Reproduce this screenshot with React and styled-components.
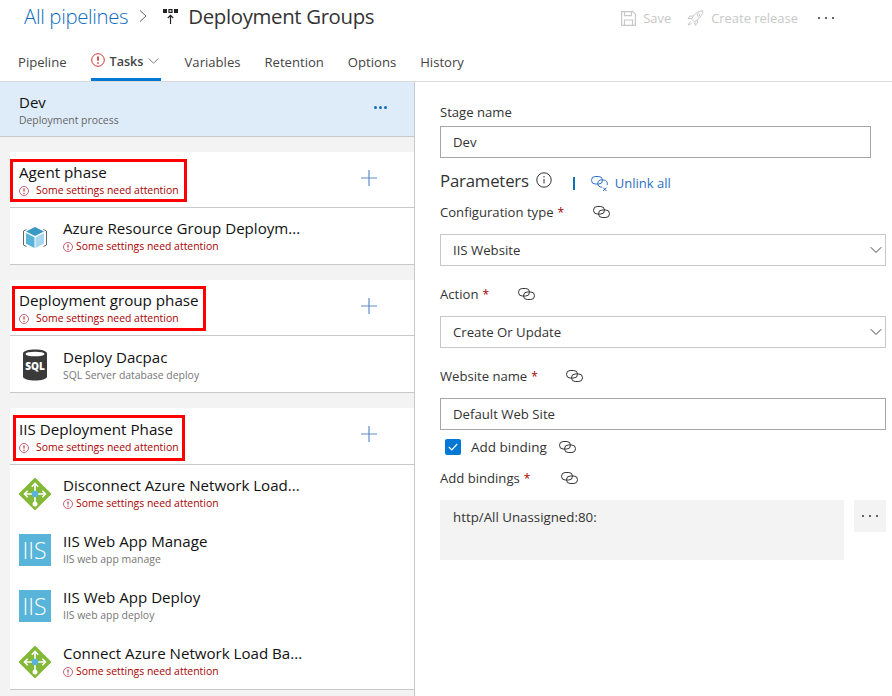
import React from "react";
import styled, { createGlobalStyle } from "styled-components";

const GlobalStyle = createGlobalStyle`
  html, body { margin: 0; padding: 0; background: #fff; }
  body { font-family: "Open Sans", "Noto Sans", "Liberation Sans", sans-serif; color: #333; }
  * { box-sizing: border-box; }
`;

const Page = styled.div`
  width: 892px;
  height: 696px;
  overflow: hidden;
  display: flex;
  flex-direction: column;
`;

const TopBar = styled.div`
  height: 36px;
  display: flex;
  align-items: center;
  justify-content: space-between;
  padding: 0 58px 4px 24px;
`;

const Crumbs = styled.div`
  display: flex;
  align-items: center;
  font-size: 20.4px;
  font-weight: 300;
  letter-spacing: -0.35px;
`;

const CrumbLink = styled.span`
  color: #106ebe;
`;

const CrumbArrow = styled.svg`
  width: 10px;
  height: 14px;
  margin: 0 15px 0 10px;
`;

const CrumbTitle = styled.span`
  color: #333;
  font-weight: 400;
  margin-left: 10px;
`;

const Actions = styled.div`
  display: flex;
  align-items: center;
  color: #c8c8c8;
  font-size: 12.95px;
  padding-top: 4px;
`;

const ActionItem = styled.div`
  display: flex;
  align-items: center;
  gap: 7px;
  margin-right: ${(p) => p.$gap}px;
`;

const MoreDots = styled.div`
  display: flex;
  gap: ${(p) => p.$gap || 5}px;
  & > i {
    width: ${(p) => p.$size || 2}px;
    height: ${(p) => p.$size || 2}px;
    border-radius: 50%;
    background: ${(p) => p.$color || "#333"};
    display: block;
  }
`;

const Tabs = styled.div`
  height: 46px;
  display: flex;
  padding: 0 0 0 18px;
  gap: 24px;
  border-bottom: 1px solid #dadada;
`;

const Tab = styled.div`
  height: 45px;
  padding-top: 16px;
  font-size: 13.1px;
  line-height: 20px;
  color: #444;
  display: flex;
  align-items: flex-start;
  gap: 5px;
  ${(p) =>
    p.$active &&
    `
    font-weight: 600;
    font-size: 12.6px;
    width: 70px;
    border-bottom: 3px solid #0078d4;
  `}
`;

const Body = styled.div`
  flex: 1;
  display: flex;
  min-height: 0;
`;

const LeftPanel = styled.div`
  width: 415px;
  flex: none;
  background: #f3f3f3;
  border-right: 1px solid #c8c8c8;
`;

const StageHeader = styled.div`
  height: 55px;
  background: #deecf9;
  border-bottom: 1px solid #c8c8c8;
  padding: 10px 27px 0 19px;
  display: flex;
  justify-content: space-between;
  align-items: flex-start;
  margin-bottom: 15px;
`;

const StageName = styled.div`
  font-size: 15px;
  line-height: 20px;
  color: #111;
`;

const StageSub = styled.div`
  font-size: 10.4px;
  line-height: 15px;
  color: #666;
  margin-top: 1px;
`;

const StageDots = styled.div`
  padding-top: 14px;
`;

const PhaseBlock = styled.div`
  margin: 0 0 15px 10px;
  background: #fff;
  border-bottom: 1px solid #c8c8c8;
`;

const PhaseHeader = styled.div`
  position: relative;
  height: ${(p) => (p.$tall ? 57 : 56)}px;
  padding: ${(p) => (p.$tall ? 11 : 10)}px 37px 0 9px;
  border-bottom: 1px solid #c8c8c8;
  display: flex;
  justify-content: space-between;
`;

const PhaseTitle = styled.div`
  font-size: 15.2px;
  line-height: 20px;
  color: #111;
`;

const RedFrame = styled.div`
  position: absolute;
  left: ${(p) => p.$left}px;
  top: ${(p) => p.$top}px;
  width: ${(p) => p.$width}px;
  height: ${(p) => p.$height}px;
  border: 3px solid #f00;
`;

const PlusIcon = styled.svg`
  width: 16px;
  height: 16px;
  margin-top: ${(p) => (p.$tall ? 7 : 8)}px;
`;

const Warning = styled.div`
  display: flex;
  align-items: center;
  font-size: 10.45px;
  line-height: 15px;
  color: #a80000;
  gap: ${(p) => p.$gap}px;
  margin-top: 1px;
`;

const TaskRow = styled.div`
  height: 56px;
  padding: ${(p) => p.$pad}px 0 0 9px;
  display: flex;
  gap: 12px;
`;

const TaskIconBox = styled.div`
  width: 32px;
  height: 32px;
  flex: none;
  margin-top: ${(p) => 13 - p.$pad}px;
`;

const TaskTitle = styled.div`
  font-size: 15.1px;
  line-height: 20px;
  color: #111;
  width: 244px;
  white-space: nowrap;
`;

const TaskSub = styled.div`
  font-size: 10.45px;
  line-height: 15px;
  color: #767676;
  margin-top: 1px;
`;

const RightPanel = styled.div`
  flex: 1;
  padding: 20px 6px 0 25px;
`;

const Label = styled.div`
  display: flex;
  align-items: center;
  height: 20px;
  font-size: 13.1px;
  color: #333;
  margin-top: ${(p) => p.$top || 0}px;
  margin-bottom: ${(p) => p.$bottom || 0}px;
`;

const Star = styled.span`
  color: #a80000;
  margin-left: 4px;
  font-size: 12px;
`;

const LinkSlot = styled.span`
  display: inline-flex;
  margin-left: ${(p) => p.$left}px;
`;

const TextBox = styled.div`
  height: 32px;
  width: ${(p) => p.$width || 446}px;
  border: 1px solid ${(p) => (p.$light ? "#c8c8c8" : "#a6a6a6")};
  padding: 0 3px 0 12px;
  display: flex;
  align-items: center;
  justify-content: space-between;
  font-size: 13.2px;
  color: #333;
`;

const ParamRow = styled.div`
  display: flex;
  align-items: center;
  height: 22px;
  margin-top: 12px;
  margin-bottom: 10px;
`;

const ParamTitle = styled.div`
  font-size: 16.8px;
  color: #333;
  letter-spacing: -0.2px;
  margin-top: -2px;
`;

const InfoSlot = styled.span`
  display: flex;
  margin: -3px 0 0 7px;
`;

const Divider = styled.div`
  width: 2px;
  height: 13px;
  background: #106ebe;
  margin: 4px 0 0 21px;
`;

const UnlinkSlot = styled.span`
  display: flex;
  margin: 5px 0 0 16px;
`;

const UnlinkText = styled.span`
  color: #2b6fc2;
  font-size: 13px;
  margin: 3px 0 0 7px;
`;

const CheckRow = styled.div`
  display: flex;
  align-items: center;
  height: 18px;
  margin: 8px 0 0 5px;
  font-size: 13.5px;
`;

const CheckBox = styled.div`
  width: 16px;
  height: 16px;
  border-radius: 2px;
  background: #0078d4;
  display: flex;
  align-items: center;
  justify-content: center;
  margin-right: 10px;
`;

const BindingRow = styled.div`
  display: flex;
  gap: 10px;
  align-items: flex-start;
`;

const BindingText = styled.div`
  width: 404px;
  height: 60px;
  background: #f3f3f3;
  font-size: 13.3px;
  padding: 8px 13px;
  line-height: 18px;
`;

const BindingButton = styled.div`
  width: 32px;
  height: 32px;
  background: #f3f3f3;
  display: flex;
  align-items: center;
  justify-content: center;
`;

const TabIcon = styled.span`
  display: flex;
  margin-top: ${(p) => p.$top}px;
`;

const ErrorIcon = ({ size = 10 }) => (
  <svg width={size} height={size} viewBox="0 0 14 14" style={{ flex: "none" }}>
    <circle cx="7" cy="7" r="6.3" fill="none" stroke={size > 11 ? "#d13438" : "#c4516b"} strokeWidth={size > 11 ? 1 : 1.3} />
    <path d="M7 3.4v4.4" stroke="#a80000" strokeWidth="1.3" />
    <circle cx="7" cy="10" r="0.8" fill="#a80000" />
  </svg>
);

const LinkIcon = () => (
  <svg width="17" height="12" viewBox="0 0 17 12" fill="none" stroke="#333" strokeWidth="1">
    <rect x="0.5" y="0.5" width="11" height="7.5" rx="3.7" />
    <rect x="5.5" y="4" width="11" height="7.5" rx="3.7" />
  </svg>
);

const UnlinkIcon = () => (
  <svg width="17" height="16" viewBox="0 0 17 16" fill="none" stroke="#2b6fc2" strokeWidth="1">
    <rect x="0.5" y="0.5" width="11" height="7.5" rx="3.7" />
    <path d="M11 11H9.200A3.700 3.700 0 0 1 9.200 4h3.600a3.700 3.700 0 0 1 3.400 5" />
    <path d="M12 11.500l3.600 3.600M15.600 11.500L12 15.100" />
  </svg>
);

const Chevron = ({ color = "#333", w = 12 }) => (
  <svg width={w} height="8" viewBox="0 0 13 8" fill="none" stroke={color} strokeWidth="1">
    <path d="M.8 1l5.700 5.700L12.200 1" />
  </svg>
);

const CubeIcon = () => (
  <svg width="32" height="32" viewBox="0 0 32 32">
    <path d="M7.500 8.500L4.500 10v14l3 1.500M24.500 8.500l3 1.500v14l-3 1.500" fill="none" stroke="#666" strokeWidth="1" />
    <path d="M16 6l9 4.500-9 4.500-9-4.500z" fill="#3999c6" />
    <path d="M7 12l8.500 4.300V27L7 22.700z" fill="#59b4d9" />
    <path d="M25 12l-8.500 4.300V27l8.500-4.300z" fill="#a9d7ee" />
  </svg>
);

const SqlIcon = () => (
  <svg width="32" height="32" viewBox="0 0 32 32">
    <path d="M4 4.500C4 2 9.500 0.500 16 0.500S28 2 28 4.500v23c0 2.500-5.500 4-12 4s-12-1.500-12-4z" fill="#3a3a3a" />
    <ellipse cx="16" cy="5" rx="9.500" ry="2.300" fill="#fff" />
    <text x="16" y="20.500" textAnchor="middle" fontSize="10" fontWeight="800" fill="#fff" fontFamily="Open Sans, sans-serif">SQL</text>
  </svg>
);

const BalancerIcon = () => (
  <svg width="32" height="32" viewBox="0 0 32 32">
    <path d="M16 1.500L30.500 16 16 30.500 1.500 16z" fill="#84b838" stroke="#84b838" strokeWidth="3" strokeLinejoin="round" />
    <g stroke="#fff" strokeWidth="1.600" fill="none">
      <path d="M16 5.500v20M5.500 16h21" />
      <path d="M12.800 8.700L16 5.500l3.200 3.200M8.700 12.800L5.500 16l3.200 3.200M23.300 12.800l3.200 3.200-3.200 3.200" />
    </g>
    <circle cx="16" cy="16" r="3.300" fill="#59b4d9" />
    <circle cx="16" cy="26" r="2.500" fill="#fff" />
  </svg>
);

const IisIcon = () => (
  <svg width="32" height="32" viewBox="0 0 32 32">
    <rect width="32" height="32" fill="#59b4d9" />
    <text x="15.500" y="24.500" textAnchor="middle" fontSize="23" fontWeight="300" fill="#fff" fontFamily="Open Sans, sans-serif">IIS</text>
  </svg>
);

const taskIcons = { cube: CubeIcon, sql: SqlIcon, lb: BalancerIcon, iis: IisIcon };

const attention = "Some settings need attention";

const phases = [
  {
    title: "Agent phase",
    rowPad: 10,
    frame: { left: 0, top: 7, width: 177, height: 43 },
    tasks: [{ icon: "cube", title: "Azure Resource Group Deploym...", warn: true }],
  },
  {
    title: "Deployment group phase",
    rowPad: 11,
    frame: { left: 2, top: 6, width: 194, height: 45 },
    tasks: [{ icon: "sql", title: "Deploy Dacpac", sub: "SQL Server database deploy" }],
  },
  {
    title: "IIS Deployment Phase",
    tall: true,
    rowPad: 10,
    frame: { left: 3, top: 7, width: 172, height: 46 },
    tasks: [
      { icon: "lb", title: "Disconnect Azure Network Load...", warn: true },
      { icon: "iis", title: "IIS Web App Manage", sub: "IIS web app manage" },
      { icon: "iis", title: "IIS Web App Deploy", sub: "IIS web app deploy" },
      { icon: "lb", title: "Connect Azure Network Load Ba...", warn: true },
    ],
  },
];

const tabNames = ["Variables", "Retention", "Options", "History"];

export default function App() {
  return (
    <Page>
      <GlobalStyle />
      <TopBar>
        <Crumbs>
          <CrumbLink>All pipelines</CrumbLink>
          <CrumbArrow viewBox="0 0 10 14" fill="none" stroke="#666" strokeWidth="1">
            <path d="M2 1.500L8 7l-6 5.500" />
          </CrumbArrow>
          <svg width="15" height="15" viewBox="0 0 15 15">
            <path d="M0 0h4v4H0zM11 0h4v4h-4z" fill="#222" />
            <path d="M6 .6h3v2.800H6z" fill="none" stroke="#222" strokeWidth="1.200" />
            <path d="M7.500 15V6.500M4.800 9l2.700-2.700L10.200 9" fill="none" stroke="#222" strokeWidth="1.200" />
          </svg>
          <CrumbTitle>Deployment Groups</CrumbTitle>
        </Crumbs>
        <Actions>
          <ActionItem $gap={16}>
            <svg width="15" height="15" viewBox="0 0 15 15" fill="none" stroke="#c8c8c8" strokeWidth="1.200">
              <path d="M.6.600h11.200l2.600 2.600v11.200H.6z" />
              <path d="M3.500.600v4h7v-4M3.500 14.400V9h8v5.400" />
            </svg>
            Save
          </ActionItem>
          <ActionItem $gap={20}>
            <svg width="17" height="16" viewBox="0 0 17 16" fill="none" stroke="#c8c8c8" strokeWidth="1">
              <path d="M16 .8c-4 .2-7 1.800-9.500 5.200L4.500 9l2.800 2.800 3-2c3.400-2.500 5.500-5.500 5.700-9z" />
              <path d="M6.500 6H3L1 8.500h3.500M10.300 9.800v3.500L8 15.300v-3.500M3.500 11.500L1 15l3.500-1.500" />
              <circle cx="11.500" cy="5" r="1.300" />
            </svg>
            Create release
          </ActionItem>
          <MoreDots>
            <i />
            <i />
            <i />
          </MoreDots>
        </Actions>
      </TopBar>

      <Tabs>
        <Tab>Pipeline</Tab>
        <Tab $active>
          <TabIcon $top={1}>
            <ErrorIcon size={14} />
          </TabIcon>
          Tasks
          <TabIcon $top={5}>
            <Chevron color="#666" w={11} />
          </TabIcon>
        </Tab>
        {tabNames.map((name) => (
          <Tab key={name}>{name}</Tab>
        ))}
      </Tabs>

      <Body>
        <LeftPanel>
          <StageHeader>
            <div>
              <StageName>Dev</StageName>
              <StageSub>Deployment process</StageSub>
            </div>
            <StageDots>
              <MoreDots $color="#106ebe" $size={3} $gap={2}>
                <i />
                <i />
                <i />
              </MoreDots>
            </StageDots>
          </StageHeader>

          {phases.map((phase) => (
            <PhaseBlock key={phase.title}>
              <PhaseHeader $tall={phase.tall}>
                <div>
                  <PhaseTitle>{phase.title}</PhaseTitle>
                  <Warning $gap={7}>
                    <ErrorIcon />
                    {attention}
                  </Warning>
                </div>
                <PlusIcon $tall={phase.tall} viewBox="0 0 16 16" stroke="#5f8dc9" strokeWidth="1.200">
                  <path d="M0 8h16M8 0v16" />
                </PlusIcon>
                <RedFrame
                  $left={phase.frame.left}
                  $top={phase.frame.top}
                  $width={phase.frame.width}
                  $height={phase.frame.height}
                />
              </PhaseHeader>
              {phase.tasks.map((task) => {
                const Icon = taskIcons[task.icon];
                return (
                  <TaskRow key={task.title} $pad={phase.rowPad}>
                    <TaskIconBox $pad={phase.rowPad}>
                      <Icon />
                    </TaskIconBox>
                    <div>
                      <TaskTitle>{task.title}</TaskTitle>
                      {task.warn ? (
                        <Warning $gap={3}>
                          <ErrorIcon />
                          {attention}
                        </Warning>
                      ) : (
                        <TaskSub>{task.sub}</TaskSub>
                      )}
                    </div>
                  </TaskRow>
                );
              })}
            </PhaseBlock>
          ))}
        </LeftPanel>

        <RightPanel>
          <Label $bottom={4}>Stage name</Label>
          <TextBox $width={431}>Dev</TextBox>

          <ParamRow>
            <ParamTitle>Parameters</ParamTitle>
            <InfoSlot>
              <svg width="16" height="16" viewBox="0 0 16 16" fill="none" stroke="#333">
                <circle cx="8" cy="8" r="7.200" />
                <path d="M8 7v4.500M8 4v1.500" />
              </svg>
            </InfoSlot>
            <Divider />
            <UnlinkSlot>
              <UnlinkIcon />
            </UnlinkSlot>
            <UnlinkText>Unlink all</UnlinkText>
          </ParamRow>

          <Label $bottom={12}>
            Configuration type<Star>*</Star>
            <LinkSlot $left={29}><LinkIcon /></LinkSlot>
          </Label>
          <TextBox $light>
            IIS Website
            <Chevron />
          </TextBox>

          <Label $top={18} $bottom={12}>
            Action<Star>*</Star>
            <LinkSlot $left={29}><LinkIcon /></LinkSlot>
          </Label>
          <TextBox $light>
            Create Or Update
            <Chevron />
          </TextBox>

          <Label $top={18} $bottom={12}>
            Website name<Star>*</Star>
            <LinkSlot $left={28}><LinkIcon /></LinkSlot>
          </Label>
          <TextBox>Default Web Site</TextBox>

          <CheckRow>
            <CheckBox>
              <svg width="10" height="8" viewBox="0 0 10 8" fill="none" stroke="#fff" strokeWidth="1.200">
                <path d="M.8 4l3 3L9.200 1" />
              </svg>
            </CheckBox>
            Add binding
            <LinkSlot $left={12}><LinkIcon /></LinkSlot>
          </CheckRow>

          <Label $top={12} $bottom={12}>
            Add bindings<Star>*</Star>
            <LinkSlot $left={31}><LinkIcon /></LinkSlot>
          </Label>
          <BindingRow>
            <BindingText>http/All Unassigned:80:</BindingText>
            <BindingButton>
              <MoreDots>
                <i />
                <i />
                <i />
              </MoreDots>
            </BindingButton>
          </BindingRow>
        </RightPanel>
      </Body>
    </Page>
  );
}
